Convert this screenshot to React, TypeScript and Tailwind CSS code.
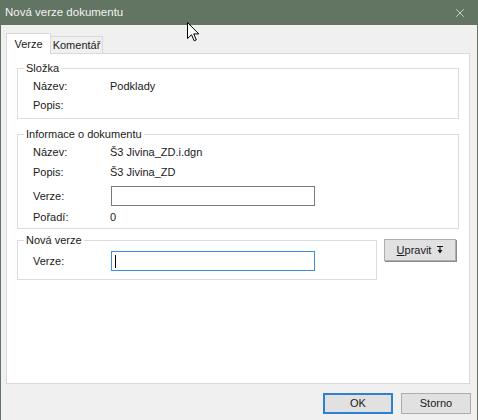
import { X } from 'lucide-react';

const font = { fontFamily: '"Liberation Sans", Arial, sans-serif' };

function Row({ label, children, className = 'h-[20px]' }: { label: string; children?: React.ReactNode; className?: string }) {
  return (
    <div className={`flex items-center pl-[15px] ${className}`}>
      <span className="w-[77px] shrink-0">{label}</span>
      {children}
    </div>
  );
}

function Group({ title, className = '', children }: { title: string; className?: string; children: React.ReactNode }) {
  return (
    <fieldset className={`border border-[#dcdcdc] ${className}`}>
      <legend className="ml-[6px] px-[2px] leading-[15px]">{title}</legend>
      {children}
    </fieldset>
  );
}

function PinIcon() {
  return (
    <svg width="6" height="8" viewBox="0 0 6 8" className="ml-[6px]">
      <path d="M0 0.5H6" stroke="#1a1a1a" strokeWidth="1" />
      <path d="M3 1V4" stroke="#1a1a1a" strokeWidth="1.2" />
      <path d="M0.5 4H5.5L3 7.5Z" fill="#1a1a1a" />
    </svg>
  );
}

function Cursor() {
  return (
    <svg width="13" height="20" viewBox="0 0 13 20" className="absolute left-[186px] top-[22px]">
      <path
        d="M0.5 0.5V16.5L4.5 12.7L7.2 18.8L9.3 17.9L6.7 11.9H11.8Z"
        fill="#ffffff"
        stroke="#000000"
        strokeWidth="1"
        strokeLinejoin="round"
      />
    </svg>
  );
}

export default function App() {
  return (
    <div
      className="relative w-[478px] h-[420px] flex flex-col bg-[#f0f0f0] border-x border-[#627462] text-[11px] text-[#1a1a1a] overflow-hidden"
      style={font}
    >
      <div className="h-[25px] shrink-0 bg-[#627462] flex items-center justify-between pl-[4px] pr-[10px] text-[#f3f3f3]">
        <span className="text-[11.5px]">Nová verze dokumentu</span>
        <X size={14} strokeWidth={1.2} color="#f3f3f3" />
      </div>

      <div className="flex items-end h-[28px] pl-[5px]">
        <div className="h-[21px] w-[45px] bg-white border border-b-0 border-[#d9d9d9] flex items-center justify-center -mb-px z-10 relative">
          Verze
        </div>
        <div className="h-[17px] w-[52px] bg-[#f0f0f0] border border-l-0 border-b-0 border-[#d9d9d9] flex items-center justify-center">
          Komentář
        </div>
      </div>

      <div className="ml-[5px] mr-[7px] h-[331px] bg-white border border-[#d9d9d9] px-[10px] pt-[7px]">
        <Group title="Složka" className="pb-[3px]">
          <Row label="Název:" className="h-[19px] mt-[1px]">
            <span>Podklady</span>
          </Row>
          <Row label="Popis:" className="h-[19px]" />
        </Group>

        <Group title="Informace o dokumentu" className="mt-[8px] pb-[3px]">
          <Row label="Název:">
            <span>Š3 Jivina_ZD.i.dgn</span>
          </Row>
          <Row label="Popis:">
            <span>Š3 Jivina_ZD</span>
          </Row>
          <Row label="Verze:" className="h-[26px] mt-[1px]">
            <div className="ml-[1px] w-[204px] h-[20px] border border-[#7a7a7a] bg-white" />
          </Row>
          <Row label="Pořadí:" className="h-[16px]">
            <span>0</span>
          </Row>
        </Group>

        <div className="flex items-start mt-[4px]">
          <Group title="Nová verze" className="w-[360px] pb-[7px]">
            <Row label="Verze:" className="h-[22px] mt-[2px]">
              <div className="ml-[1px] w-[204px] h-[20px] border border-[#3c8fda] bg-white flex items-center pl-[3px]">
                <div className="w-px h-[13px] bg-black" />
              </div>
            </Row>
          </Group>
          <button className="ml-[7px] mt-[6px] w-[72px] h-[22px] bg-[#e1e1e1] border border-[#adadad] shadow-[1px_1px_0_#8a8a8a] flex items-center justify-center">
            <span>
              <span className="underline">U</span>pravit
            </span>
            <PinIcon />
          </button>
        </div>
      </div>

      <div className="flex justify-end gap-[8px] pr-[6px] mt-[9px]">
        <button className="w-[70px] h-[21px] bg-[#e1e1e1] border-2 border-[#2e80d4] flex items-center justify-center">
          OK
        </button>
        <button className="w-[70px] h-[21px] bg-[#e1e1e1] border border-[#adadad] flex items-center justify-center">
          Storno
        </button>
      </div>

      <Cursor />
    </div>
  );
}
